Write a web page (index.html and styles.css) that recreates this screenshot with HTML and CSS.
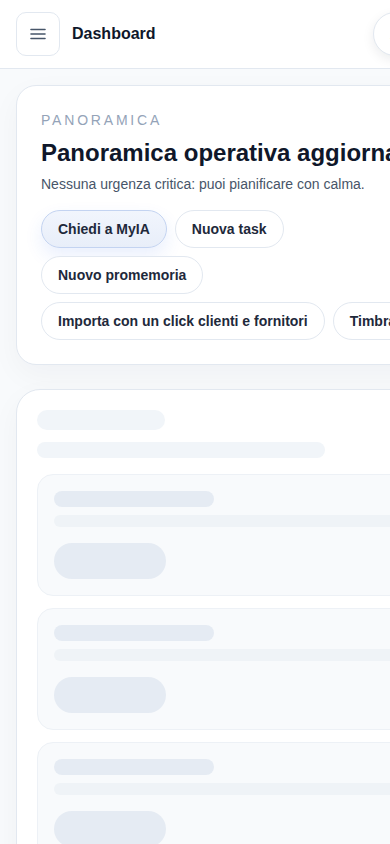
FILE: index.html
```html
<!DOCTYPE html>
<html lang="it">

<head>
    <meta charset="UTF-8">
    <meta name="viewport" content="width=device-width, initial-scale=1.0">
    <title>Dashboard</title>
    <link rel="stylesheet" href="styles.css">
</head>

<body>

    <div class="app">
        <header class="topbar">
            <button class="menu-btn" aria-label="Menu">
                <svg width="18" height="18" viewBox="0 0 18 18" fill="none">
                    <path d="M2 4.5h14M2 9h14M2 13.5h14" stroke="#475569" stroke-width="1.6" stroke-linecap="round"/>
                </svg>
            </button>
            <span class="topbar-title">Dashboard</span>
            <div class="topbar-actions">
                <button class="round-btn avatar" aria-label="Account">A</button>
                <button class="round-btn" aria-label="Notifiche">
                    <svg width="18" height="18" viewBox="0 0 18 18" fill="none">
                        <path d="M4.5 12.5V8a4.5 4.5 0 0 1 9 0v4.5l1.5 1.5H3z" stroke="#334155" stroke-width="1.5" stroke-linejoin="round"/>
                        <path d="M7.5 16h3" stroke="#334155" stroke-width="1.5" stroke-linecap="round"/>
                    </svg>
                </button>
            </div>
        </header>

        <main class="content">
            <section class="card overview">
                <p class="eyebrow">Panoramica</p>
                <h1 class="overview-title">Panoramica operativa aggiornata</h1>
                <p class="overview-sub">Nessuna urgenza critica: puoi pianificare con calma.</p>

                <div class="actions">
                    <div class="action-group">
                        <button class="chip chip-primary">Chiedi a MyIA</button>
                        <button class="chip">Nuova task</button>
                        <button class="chip">Nuovo promemoria</button>
                    </div>
                    <div class="action-row">
                        <button class="chip">Importa con un click clienti e fornitori</button>
                        <button class="chip">Timbra cartellino</button>
                    </div>
                </div>
            </section>

            <section class="card loading">
                <div class="sk sk-title"></div>
                <div class="sk sk-line"></div>

                <div class="sk-list">
                    <div class="sk-item">
                        <div class="sk sk-item-title"></div>
                        <div class="sk sk-item-line"></div>
                        <div class="sk sk-pill"></div>
                    </div>
                    <div class="sk-item">
                        <div class="sk sk-item-title"></div>
                        <div class="sk sk-item-line"></div>
                        <div class="sk sk-pill"></div>
                    </div>
                    <div class="sk-item">
                        <div class="sk sk-item-title"></div>
                        <div class="sk sk-item-line"></div>
                        <div class="sk sk-pill"></div>
                    </div>
                </div>
            </section>
        </main>
    </div>

</body>

</html>
```

FILE: styles.css
```css
html,
body {
    margin: 0;
    padding: 0;
    height: 100%;
    overflow: hidden; /* page is wider than the phone, clip it */
    background-color: #f8fafc;
    font-family: "Liberation Sans", Arial, sans-serif;
    color: #0f172a;
}

.app {
    width: 485px;
}

/* top bar */

.topbar {
    display: flex;
    align-items: center;
    gap: 12px;
    padding: 12px 16px;
    background-color: #ffffff;
    border-bottom: 1px solid #e2e8f0;
}

.menu-btn {
    width: 44px;
    height: 44px;
    display: flex;
    align-items: center;
    justify-content: center;
    padding: 0;
    background-color: #ffffff;
    border: 1px solid #e2e8f0;
    border-radius: 10px;
}

.topbar-title {
    font-size: 16px;
    font-weight: 700;
    color: #0f172a;
}

.topbar-actions {
    margin-left: auto;
    display: flex;
    gap: 8px;
}

.round-btn {
    width: 44px;
    height: 44px;
    display: flex;
    align-items: center;
    justify-content: center;
    padding: 0;
    background-color: #ffffff;
    border: 1px solid #e2e8f0;
    border-radius: 50%;
    box-shadow: 0 4px 12px rgba(15, 23, 42, 0.08);
}

.avatar {
    font-family: inherit;
    font-size: 14px;
    font-weight: 700;
    color: #334155;
}

/* content */

.content {
    display: flex;
    flex-direction: column;
    gap: 24px;
    padding: 16px;
}

.card {
    background-color: #ffffff;
    border: 1px solid #e2e8f0;
    border-radius: 20px;
    box-shadow: 0 10px 30px rgba(15, 23, 42, 0.04);
}

.overview {
    padding: 24px;
}

.eyebrow {
    margin: 0;
    font-size: 14px;
    line-height: 20px;
    letter-spacing: 0.2em;
    text-transform: uppercase;
    color: #94a3b8;
}

.overview-title {
    margin: 8px 0 0;
    font-size: 24px;
    line-height: 30px;
    font-weight: 700;
    white-space: nowrap;
    color: #0f172a;
}

.overview-sub {
    margin: 6px 0 0;
    font-size: 14px;
    line-height: 20px;
    color: #475569;
}

.actions {
    display: flex;
    flex-direction: column;
    gap: 8px;
    margin-top: 16px;
}

.action-group {
    display: flex;
    flex-wrap: wrap;
    gap: 8px;
}

.action-row {
    display: flex;
    gap: 8px;
}

.chip {
    flex-shrink: 0;
    padding: 10px 16px;
    font-family: inherit;
    font-size: 14px;
    line-height: 16px;
    font-weight: 700;
    white-space: nowrap;
    color: #1e293b;
    background-color: #ffffff;
    border: 1px solid #e2e8f0;
    border-radius: 999px;
}

.chip-primary {
    background: linear-gradient(180deg, #f1f5fd, #e8eef9);
    border-color: #c3d3f1;
    box-shadow: 0 8px 18px rgba(37, 99, 235, 0.10);
}

/* loading skeleton */

.loading {
    padding: 20px;
    border-radius: 24px;
}

.sk {
    border-radius: 999px;
    background-color: #f1f5f9;
}

.sk-title {
    width: 128px;
    height: 20px;
}

.sk-line {
    width: 288px;
    height: 16px;
    margin-top: 12px;
}

.sk-list {
    display: flex;
    flex-direction: column;
    gap: 12px;
    margin-top: 16px;
}

.sk-item {
    padding: 16px;
    background-color: #f8fafc;
    border: 1px solid #edf1f6;
    border-radius: 16px;
}

.sk-item-title {
    width: 160px;
    height: 16px;
    background-color: #e5ebf3;
}

.sk-item-line {
    height: 12px;
    margin-top: 8px;
    background-color: #eff3f7;
}

.sk-pill {
    width: 112px;
    height: 36px;
    margin-top: 16px;
    background-color: #e5ebf3;
}
```
